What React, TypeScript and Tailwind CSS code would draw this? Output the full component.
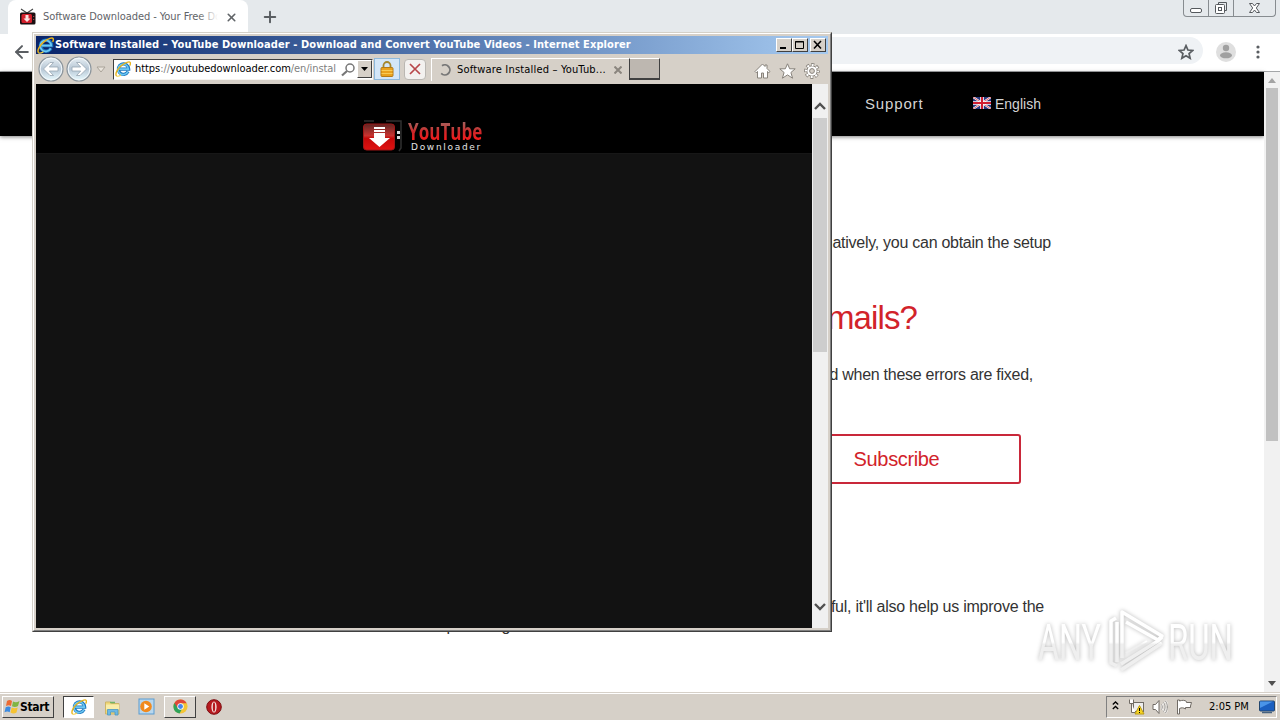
import type { ReactNode } from "react";
import { ArrowLeft, Plus, X } from "lucide-react";

function IeLogo({ size = 16 }: { size?: number }) {
  return (
    <svg width={size} height={size} viewBox="0 0 16 16" fill="none" className="shrink-0">
      <path d="M13.1 10.6a5.200 5.200 0 1 1 .6-2.500H4.200" stroke="#1c77bd" strokeWidth="3.200" />
      <path d="M12.900 10.600a5.200 5.200 0 1 1 .5-2.500H4.200" stroke="#6cc8f4" strokeWidth="1.600" />
      <path d="M1.600 15c-2-2 .8-7 4.600-10.200C10.500 1.200 14.500.2 15.200 1.500c.5.900.1 2-.5 3.100" stroke="#e8b41c" strokeWidth="1.400" />
      <path d="M1.600 15c1 .7 2.700 0 4.400-1" stroke="#f4d24a" strokeWidth="1.200" />
    </svg>
  );
}

function TvIcon() {
  return (
    <svg width="18" height="18" viewBox="0 0 18 18">
      <path d="M2 1l6 4 6-4" stroke="#444" strokeWidth="1.100" fill="none" />
      <rect x="1" y="4.500" width="15.500" height="12" rx="1.500" fill="#1c1013" />
      <rect x="2.500" y="6" width="10.500" height="9" rx="1.500" fill="#d3202c" />
      <path d="M6.500 7h3v3.500h2l-3.500 3.500-3.500-3.500h2z" fill="#fbe3e3" />
      <path d="M14.700 8v1M14.700 11v1" stroke="#b55" />
    </svg>
  );
}

function TabStrip() {
  return (
    <div className="flex h-[34px] items-start bg-[#e5e9ec] pl-2">
      <div className="flex h-[34px] w-60 items-center rounded-t-lg bg-white pl-[11px]">
        <TvIcon />
        <div className="relative ml-1.5 mt-px w-[175px] overflow-hidden whitespace-nowrap text-[11px] tracking-[-0.06px] text-[#5f6368]">
          Software Downloaded - Your Free Do
          <span className="absolute inset-y-0 right-0 w-5 bg-linear-to-r from-transparent to-white" />
        </div>
        <X size={13} strokeWidth={3} className="ml-[7px] text-[#606468]" />
      </div>
      <Plus size={18} strokeWidth={2.600} className="ml-[13px] mt-2 text-[#5a5e62]" />
      <div className="ml-auto flex h-[17px] w-[93px] rounded-b-[4px] border border-t-0 border-[#878c90] text-[#55595d]">
        <svg width="91" height="16" viewBox="0 0 91 16" fill="none" stroke="currentColor">
          <path d="M24.500 0v16M49.500 0v16" stroke="#878c90" />
          <rect x="6.500" y="8.500" width="11" height="4" rx="1.500" fill="#fff" />
          <path d="M34.500 4.500v-2h8v8h-2" />
          <rect x="31.500" y="4.500" width="9" height="9" rx="1" fill="#fff" />
          <rect x="34.500" y="7.500" width="3" height="3" />
          <path d="M65.500 3.500h3l2 2.500 2-2.500h3l-3.200 4.500 3.200 4.500h-3l-2-2.500-2 2.500h-3l3.200-4.500z" fill="#fff" />
        </svg>
      </div>
      <div className="w-1" />
    </div>
  );
}

function Toolbar() {
  return (
    <div className="flex h-[38px] items-center border-b border-[#a4a6a8] bg-white">
      <ArrowLeft size={20} strokeWidth={2.400} className="ml-3 mb-[1px] text-[#5a5e62]" />
      <div className="mb-1 ml-[79px] flex h-[27px] w-[1092px] items-center justify-end rounded-full bg-[#eff2f5] pr-[9px]">
        <svg width="16" height="16" viewBox="0 0 24 24" fill="none" stroke="#5a5e62" strokeWidth="2.600" className="mt-0.5">
          <path d="M12 2.500l2.900 6.500 7 .7-5.300 4.700 1.600 7-6.200-3.700-6.200 3.700 1.600-7L2.100 9.700l7-.7z" />
        </svg>
      </div>
      <svg width="20" height="20" viewBox="0 0 20 20" className="mb-[1px] ml-[13px]">
        <circle cx="10" cy="10" r="10" fill="#dfdfdf" />
        <circle cx="10" cy="6" r="3.200" fill="#a0a0a0" />
        <ellipse cx="10" cy="13.300" rx="6" ry="3" fill="#a0a0a0" />
      </svg>
      <svg width="4" height="14" viewBox="0 0 4 14" className="mb-[1px] ml-5 text-[#5a5e62]" fill="currentColor">
        <circle cx="2" cy="2" r="1.600" />
        <circle cx="2" cy="7" r="1.600" />
        <circle cx="2" cy="12" r="1.600" />
      </svg>
    </div>
  );
}

function UkFlag() {
  return (
    <svg width="18" height="12" viewBox="0 0 18 12" className="mb-0.5">
      <path fill="#27377f" d="M0 0h18v12H0z" />
      <path d="M0 0l18 12M18 0L0 12" stroke="#fff" strokeWidth="2" />
      <path d="M0 0l18 12M18 0L0 12" stroke="#d3363f" strokeWidth=".8" />
      <path d="M9 0v12M0 6h18" stroke="#fff" strokeWidth="3.600" />
      <path d="M9 0v12M0 6h18" stroke="#d11e31" strokeWidth="2" />
    </svg>
  );
}

function WebPage() {
  return (
    <div className="flex h-[620px]">
      <div className="flex w-[1264px] flex-col bg-white font-['Liberation_Sans',sans-serif] text-[#333]">
        <nav className="flex h-16 shrink-0 items-center bg-black pl-[865px] text-[15px] text-[#d4d4d4] shadow-[0_1px_4px_rgba(0,0,0,0.5)]">
          <span className="w-[108px] tracking-[0.85px]">Support</span>
          <UkFlag />
          <span className="ml-1 text-[14px]">English</span>
        </nav>
        <p className="mt-[95px] w-[1051px] text-right text-base leading-6 tracking-[-0.27px]">Alternatively, you can obtain the setup</p>
        <h2 className="mt-[43px] w-[917px] text-right text-[33px] leading-10 tracking-[-0.9px] text-[#d2232a]">emails?</h2>
        <p className="mt-[25px] w-[1033px] text-right text-base leading-6 tracking-[-0.27px]">notified when these errors are fixed,</p>
        <div className="ml-[772px] mt-[47px] flex h-[50px] w-[249px] items-center justify-center rounded-[3px] border-2 border-[#c9283a] text-xl text-[#d2232a]">
          <span className="tracking-[-0.35px]">Subscribe</span>
        </div>
        <p className="mt-[111px] w-[1044px] text-right text-base leading-6 tracking-[-0.25px]">useful, it&apos;ll also help us improve the</p>
        <p className="mt-[-5px] w-[511px] text-right text-base leading-6 tracking-[0.5px]">uploading</p>
      </div>
      <div className="flex w-4 flex-col items-center justify-between bg-[#f1f1f1] py-1.5">
        <div className="flex flex-col items-center">
          <svg width="8" height="5" viewBox="0 0 8 5" fill="#a3a3a3"><path d="M4 0l4 5H0z" /></svg>
          <div className="mt-[5px] h-[353px] w-3 bg-[#c1c1c1]" />
        </div>
        <svg width="8" height="5" viewBox="0 0 8 5" fill="#505050"><path d="M0 0h8L4 5z" /></svg>
      </div>
    </div>
  );
}

function CaptionButton({ children }: { children: ReactNode }) {
  return (
    <div className="h-3.5 w-4 border border-b-[#404040] border-l-white border-r-[#404040] border-t-white bg-[#d6d0c8]">
      <svg width="14" height="12" viewBox="0 0 14 12" fill="none" stroke="#000">{children}</svg>
    </div>
  );
}

function NavCircle({ flip = false }: { flip?: boolean }) {
  return (
    <svg width="26" height="26" viewBox="0 0 26 26" className={flip ? "ml-0.5 -scale-x-100" : ""}>
      <defs>
        <linearGradient id="orb" x1="0" y1="0" x2="0" y2="1">
          <stop offset="0" stopColor="#e9f0f5" />
          <stop offset=".5" stopColor="#b7c7d5" />
          <stop offset="1" stopColor="#e9fbff" />
        </linearGradient>
      </defs>
      <circle cx="13" cy="13" r="12" fill="url(#orb)" stroke="#8b949b" strokeWidth="1.200" />
      <circle cx="13" cy="13" r="10.800" fill="none" stroke="#f3f8fb" />
      <path d="M5.500 13l6.500-6.500h3.500L11.300 11H20v4h-8.700l4.200 4.500H12z" fill="#fff" stroke="#96a5b1" strokeWidth=".8" />
    </svg>
  );
}

function BrowserLogo() {
  return (
    <div className="flex items-start">
      <svg width="40" height="32" viewBox="0 0 40 32">
        <defs>
          <linearGradient id="screen" x1="0" y1="0" x2="0" y2="1">
            <stop offset="0" stopColor="#5d2624" />
            <stop offset=".45" stopColor="#c93330" />
            <stop offset=".55" stopColor="#c40808" />
            <stop offset="1" stopColor="#e01212" />
          </linearGradient>
        </defs>
        <path d="M2 1h10M24 1h15v27l-2 3" fill="none" stroke="#303030" strokeWidth="1.500" />
        <rect x="1.500" y="4" width="31" height="26" rx="3" fill="url(#screen)" stroke="#a01616" />
        <path d="M12 7h11v2H12zM12 10h11v2H12zM12 13h11v5h5L17.500 27 7 18h5z" fill="#fff" />
        <path d="M35 11h3v3h-3zM35 16h3v3h-3z" fill="#ddd" />
      </svg>
      <div className="ml-[6px] flex w-[78px] flex-col">
        <span className="h-[22px] w-[107px] origin-left scale-x-[0.71] bg-linear-to-b from-[#966] via-[#c9282b] to-[#ff1111] bg-clip-text font-['Open_Sans',sans-serif] text-[24px] font-bold leading-[22px] text-transparent">YouTube</span>
        <span className="ml-[3px] font-['DejaVu_Sans',sans-serif] text-[9px] leading-[10px] tracking-[1.700px] text-[#e4e4e4]">Downloader</span>
      </div>
    </div>
  );
}

function ExplorerWindow() {
  return (
    <div className="absolute left-8 top-8 flex h-[600px] w-[800px] flex-col border border-b-[#404040] border-l-[#d4d0c8] border-r-[#404040] border-t-[#d4d0c8] bg-[#d6d0c8]">
      <div className="flex grow flex-col border border-b-[#808080] border-l-white border-r-[#808080] border-t-white p-0.5">
        <div className="flex h-[18px] items-center bg-linear-to-r from-[#0a246a] to-[#a6caf0] pl-[1px] pr-0.5 font-['DejaVu_Sans_Condensed','DejaVu_Sans',sans-serif]">
          <IeLogo size={17} />
          <span className="ml-px mt-px whitespace-nowrap text-[11px] font-bold tracking-[0.1px] text-white">
            Software Installed – YouTube Downloader - Download and Convert YouTube Videos - Internet Explorer
          </span>
          <div className="ml-auto flex">
            <CaptionButton><path d="M3 9h6" strokeWidth="2" /></CaptionButton>
            <CaptionButton><path d="M2.500 2.500h8v7h-8zM2 3h9" /></CaptionButton>
            <div className="w-0.5" />
            <CaptionButton><path d="M3 2l7 7.500M10 2L3 9.500" strokeWidth="1.600" /></CaptionButton>
          </div>
        </div>
        <div className="flex h-[30px] items-center pl-[2px] text-[11px] text-black">
          <NavCircle />
          <NavCircle flip />
          <svg width="10" height="7" viewBox="0 0 10 7" className="ml-1"><path d="M1 1h8L5 6z" fill="#eae5dd" stroke="#aaa49a" /></svg>
          <div className="ml-[7px] flex h-[21px] w-[260px] items-center border border-l-[#404040] border-t-[#404040] border-b-[#f5f3ef] border-r-[#f5f3ef] bg-white pl-[1px]">
            <IeLogo />
            <span className="ml-1 mt-px w-[203px] overflow-hidden whitespace-nowrap tracking-[-0.06px] text-[#808080]">
              <span className="text-black">https</span>://<span className="text-black">youtubedownloader.com</span>/en/instal
            </span>
            <svg width="15" height="15" viewBox="0 0 15 15" fill="none" stroke="#777" className="ml-[3px]">
              <circle cx="9" cy="6" r="4" strokeWidth="1.500" />
              <path d="M6 9l-5 4.500" strokeWidth="2.200" />
            </svg>
            <div className="ml-auto grid h-[18px] w-[15px] place-items-center border border-b-[#404040] border-l-white border-r-[#404040] border-t-white bg-[#d6d0c8]">
              <svg width="7" height="4" viewBox="0 0 7 4"><path d="M0 0h7L3.500 4z" /></svg>
            </div>
          </div>
          <div className="ml-[1px] grid h-[22px] w-[26px] place-items-center border border-[#8eb9dc] bg-[#d3e6f8]">
            <svg width="14" height="16" viewBox="0 0 14 16">
              <path d="M3.500 7V4.500a3.500 3.500 0 0 1 7 0V7" fill="none" stroke="#a5872e" strokeWidth="1.800" />
              <rect x="1" y="6.500" width="12" height="9" rx="1" fill="#e9a21f" stroke="#b47b18" />
              <path d="M1.500 9.500h11M1.500 12.500h11" stroke="#f8cb56" />
            </svg>
          </div>
          <div className="ml-[4px] grid h-[21px] w-[22px] place-items-center rounded-sm border border-[#bab7b2] bg-[#f3f1ef]">
            <svg width="12" height="12" viewBox="0 0 12 12" fill="none" stroke="#b8474a" strokeWidth="1.700"><path d="M1 1l10 10M11 1L1 11" /></svg>
          </div>
          <div className="ml-[5px] flex h-[23px] w-[198px] items-center border-l border-t border-white pl-[7px]">
            <svg width="12" height="12" viewBox="0 0 12 12" fill="none" stroke="#777" strokeWidth="1.800"><path d="M3 1.800A5 5 0 1 1 2.200 9.300" /></svg>
            <span className="ml-[6px] mt-px whitespace-nowrap tracking-[0.18px]">Software Installed – YouTub...</span>
            <svg width="8" height="8" viewBox="0 0 8 8" className="ml-auto mr-[7px]" stroke="#8a857e" strokeWidth="2"><path d="M.5.500l7 7M7.500.500l-7 7" /></svg>
          </div>
          <div className="h-[22px] w-[31px] border border-b-2 border-b-[#404040] border-l-[#404040] border-r-[#404040] border-t-white bg-[#bdb7b0]" />
          <div className="ml-auto mt-1 flex items-center gap-2 pr-2">
            <svg width="17" height="16" viewBox="0 0 17 16" fill="#fff" stroke="#87827b"><path d="M8.500 1L1 8.500l1.200 1.200L3.500 8.500v6.500h4v-5h2v5h4V8.500l1.300 1.200L16 8.500l-3-3V2h-2v1.500z" /></svg>
            <svg width="17" height="16" viewBox="0 0 17 16" fill="#fff" stroke="#87827b"><path d="M8.500.800l2.200 5h5.500l-4.300 3.700 1.700 5.700-5.100-3.300-5.100 3.300 1.700-5.700L.800 5.800h5.500z" /></svg>
            <svg width="16" height="16" viewBox="0 0 16 16">
              <circle cx="8" cy="8" r="6.200" fill="none" stroke="#87827b" strokeWidth="3.400" strokeDasharray="3 1.870" strokeDashoffset="1.500" />
              <circle cx="8" cy="8" r="5.200" fill="#fff" stroke="#87827b" />
              <circle cx="8" cy="8" r="6" fill="none" stroke="#fff" strokeWidth="2.200" strokeDasharray="1.900 2.812" strokeDashoffset=".95" />
              <circle cx="8" cy="8" r="2.400" fill="#d6d0c8" stroke="#87827b" />
            </svg>
          </div>
        </div>
        <div className="flex grow">
          <div className="flex w-[776px] flex-col bg-[#121212]">
            <div className="h-[70px] border-b border-[#171717] bg-black pl-[326px] pt-9">
              <BrowserLogo />
            </div>
          </div>
          <div className="flex w-4 flex-col items-center justify-between bg-[#f0f0f0] pb-[17px] pt-[18px]">
            <div className="flex flex-col items-center">
              <svg width="12" height="8" viewBox="0 0 12 8" fill="none" stroke="#505050" strokeWidth="2.400"><path d="M1 7l5-5 5 5" /></svg>
              <div className="mt-2 h-[234px] w-3.5 bg-[#cdcdcd]" />
            </div>
            <svg width="12" height="8" viewBox="0 0 12 8" fill="none" stroke="#505050" strokeWidth="2.400"><path d="M1 1l5 5 5-5" /></svg>
          </div>
        </div>
      </div>
    </div>
  );
}

function Watermark() {
  return (
    <svg width="210" height="80" viewBox="0 0 210 80" className="absolute left-[1030px] top-[601px] drop-shadow-[0_0_2px_rgba(0,0,0,0.28)]">
      <defs>
        <linearGradient id="sheen" gradientUnits="userSpaceOnUse" x1="0" y1="10" x2="0" y2="72">
          <stop offset=".5" stopColor="#fff" />
          <stop offset=".54" stopColor="#efefef" />
        </linearGradient>
      </defs>
      <g fill="url(#sheen)" fontFamily="Roboto, sans-serif" fontSize="50">
        <text x="8" y="59" textLength="63" lengthAdjust="spacingAndGlyphs">ANY</text>
        <text x="138" y="59" textLength="65" lengthAdjust="spacingAndGlyphs">RUN</text>
      </g>
      <g fill="none" stroke="url(#sheen)" strokeLinejoin="round" strokeWidth="3.500">
        <path d="M86 17l-5 3v42l6 3M87 21v40" />
        <path d="M92 57V11l40 24-4 4-32-18" />
        <path d="M91 63l37-23 4-4M91 69l41-27" />
        <path d="M96 52l21-12" strokeWidth="2" />
      </g>
    </svg>
  );
}

function Taskbar() {
  return (
    <div className="flex h-7 items-center border-t border-[#d6d0c8] bg-[#d6d0c8] pl-0.5 pr-[3px] shadow-[inset_0_1px_0_#fff] font-['DejaVu_Sans_Condensed','DejaVu_Sans',sans-serif]">
      <div className="flex h-[22px] w-[52px] items-center border border-b-[#404040] border-l-white border-r-[#404040] border-t-white pl-[1px]">
        <svg width="16" height="16" viewBox="0 0 16 16">
          <path d="M3 2c2-1.300 3.500-1.200 5 0L7 7C5.500 6 4 6 2 7z" fill="#ed6b32" />
          <path d="M9 2.500c2 1 4 1 6.500-.5L14 7c-2 1.200-4 1.200-6 .2z" fill="#80b543" />
          <path d="M1.700 8.300c2-1 3.500-1 5 0l-1 5C4 12 2.500 12.200.500 13.300z" fill="#3d8be0" />
          <path d="M7.700 8.500c2 1 4 1 6 0l-1.200 5c-2 1.300-4 1.200-6 0z" fill="#f6c332" />
        </svg>
        <span className="text-xs font-bold tracking-[-0.3px] text-black">Start</span>
      </div>
      <div className="ml-[9px] grid h-[22px] w-[31px] place-items-center border border-b-white border-l-[#404040] border-r-white border-t-[#404040] bg-white"><IeLogo /></div>
      <svg width="17" height="17" viewBox="0 0 17 17" className="ml-[10px] mt-0.5">
        <path d="M1.500 3h5l1 1.500H15V15H1.500z" fill="#f0d878" stroke="#cdb568" />
        <path d="M2 5.500h13v5H2z" fill="#f8edaa" />
        <path d="M6 3.500h5" stroke="#72b565" strokeWidth="1.500" />
        <path d="M3.500 16v-5.500h10.500V16H11v-3H6.500v3z" fill="#6db8e4" stroke="#4a98c4" strokeWidth=".8" />
      </svg>
      <svg width="17" height="17" viewBox="0 0 17 17" className="ml-[17px]">
        <rect x="1" y="1" width="15" height="15" fill="#b8d7ee" stroke="#5a9bd0" />
        <circle cx="8" cy="8.500" r="5.800" fill="#f18a1e" />
        <path d="M6.300 5.200v6.600l5-3.300z" fill="#fff" />
      </svg>
      <div className="ml-[9px] grid h-[22px] w-8 place-items-center border border-b-[#404040] border-l-white border-r-[#404040] border-t-white bg-[#dcd7d0]">
        <svg width="15" height="15" viewBox="0 0 16 16">
          <circle cx="8" cy="8" r="7.500" fill="#f4c534" />
          <path d="M8 8L1.500 4.200A7.500 7.500 0 0 0 7 15.500l3.300-6.300z" fill="#2fa25a" />
          <path d="M1.500 4.200A7.500 7.500 0 0 1 14.600 4.500H8L5 9.500z" fill="#df4739" />
          <circle cx="8" cy="8" r="3.400" fill="#fff" />
          <circle cx="8" cy="8" r="2.600" fill="#4686ec" />
        </svg>
      </div>
      <svg width="16" height="16" viewBox="0 0 16 16" className="ml-[10px] mt-px">
        <circle cx="8" cy="8" r="7.300" fill="#b71a1f" stroke="#7c0c10" />
        <ellipse cx="8" cy="8" rx="2.600" ry="5.500" fill="#f5e6e3" />
        <ellipse cx="8" cy="8" rx="1.200" ry="4.700" fill="#b71a1f" />
      </svg>
      <div className="ml-auto flex h-[22px] w-[171px] items-center border border-b-white border-l-[#808080] border-r-white border-t-[#808080] pl-[5px] text-[11px] text-black">
        <svg width="7" height="9" viewBox="0 0 7 9" fill="none" stroke="#000" strokeWidth="1.300" className="mb-0.5"><path d="M.800 3.500l2.700-2.500 2.700 2.500M.800 8l2.700-2.500L6.200 8" /></svg>
        <svg width="17" height="16" viewBox="0 0 17 16" className="ml-[9px] mt-px" fill="none" stroke="#706b65">
          <rect x="5.500" y="3.500" width="10" height="9" fill="#eee" />
          <path d="M1.500.500v4h4v-4M3.500 4.500v9h4" fill="#fff" />
          <path d="M11.500 6.500l4.500 8.500H7z" fill="#f6d423" stroke="#bb9b14" />
          <path d="M11.500 9v3M11.500 13v1" stroke="#000" />
        </svg>
        <svg width="16" height="16" viewBox="0 0 16 16" className="ml-[7px] mt-px" fill="none" stroke="#706b65">
          <path d="M1 5.500h2.500L7 1.500v13l-3.500-4H1z" fill="#fff" />
          <path d="M9.500 5.500c1 1.500 1 3.500 0 5M11.500 3.500c2 2.500 2 6.500 0 9M13.500 2c2.500 3.500 2.500 8.500 0 12" stroke="#fff" strokeWidth="2" />
          <path d="M9.500 5.500c1 1.500 1 3.500 0 5M11.500 3.500c2 2.500 2 6.500 0 9M13.500 2c2.500 3.500 2.500 8.500 0 12" strokeWidth=".8" />
        </svg>
        <svg width="16" height="16" viewBox="0 0 16 16" className="ml-2 mt-px" fill="#fff" stroke="#706b65">
          <path d="M1.500 1v14h2V9.500c2-1 4-1 6 .5V8.500h5V7l1-3.500h-5V2.500c-2-1.500-4-1.500-7-.5V1z" />
        </svg>
        <span className="ml-[17px] mt-0.5 whitespace-nowrap">2:05 PM</span>
        <svg width="16" height="14" viewBox="0 0 16 14" className="ml-auto mr-[1px] mt-px">
          <rect x=".500" y="1" width="15" height="10" rx="1" fill="#1b5fc0" stroke="#23466e" />
          <path d="M1 1.500h13L1 8z" fill="#4a94e8" />
          <path d="M3 12.500h10" stroke="#46627f" strokeWidth="1.500" />
        </svg>
      </div>
    </div>
  );
}

export default function App() {
  return (
    <div className="relative h-[720px] w-[1280px] overflow-hidden bg-white font-['DejaVu_Sans_Condensed','DejaVu_Sans',sans-serif]">
      <TabStrip />
      <Toolbar />
      <WebPage />
      <Taskbar />
      <ExplorerWindow />
      <Watermark />
    </div>
  );
}
